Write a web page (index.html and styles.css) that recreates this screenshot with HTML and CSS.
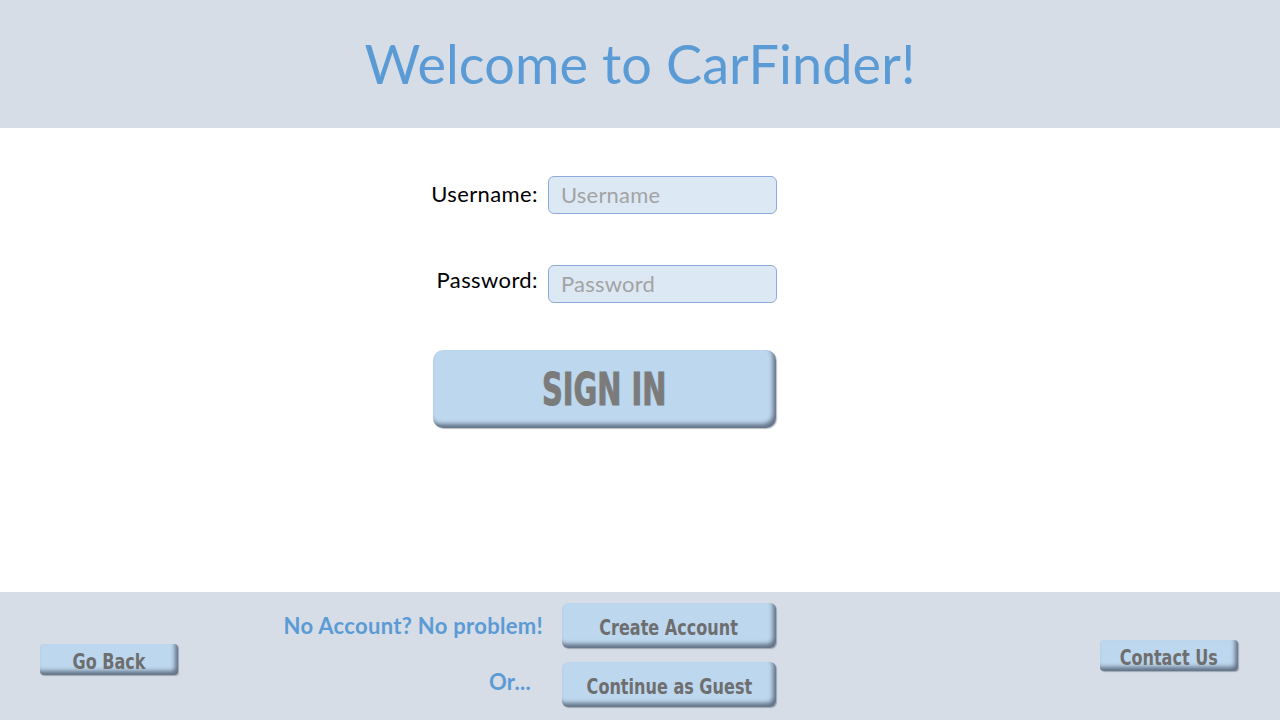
FILE: index.html
```html
<!DOCTYPE html>
<html>
<head>
<meta charset="utf-8">
<link rel="stylesheet" href="styles.css">
</head>
<body>
<header class="top">
  <h1 class="title">Welcome to CarFinder!</h1>
</header>
<main class="main">
  <form class="login">
    <label class="label">Username:</label>
    <div class="field"><span class="ph">Username</span></div>
    <label class="label label-pw">Password:</label>
    <div class="field"><span class="ph">Password</span></div>
    <div class="signin-wrap">
      <div class="btn btn-signin"><span class="signin-text">SIGN IN</span></div>
    </div>
  </form>
</main>
<footer class="bottom">
  <div class="btn btn-small btn-back"><span class="btxt">Go Back</span></div>
  <div class="middle">
    <div class="note">No Account? No problem!</div>
    <div class="btn btn-mid"><span class="btxt">Create Account</span></div>
    <div class="note note-or">Or...</div>
    <div class="btn btn-mid"><span class="btxt">Continue as Guest</span></div>
  </div>
  <div class="btn btn-small btn-contact"><span class="btxt">Contact Us</span></div>
</footer>
</body>
</html>
```
FILE: styles.css
```css
* { box-sizing: border-box; }
html, body { margin: 0; padding: 0; }
body {
  width: 1280px;
  height: 720px;
  overflow: hidden;
  font-family: Lato, "Open Sans", sans-serif;
  background: #ffffff;
}
.top {
  height: 128px;
  background: #d6dde6;
  display: flex;
  align-items: center;
  justify-content: center;
}
.title {
  margin: 0;
  font-weight: 400;
  font-size: 54px;
  letter-spacing: 0.1px;
  color: #5b9bd5;
  padding-bottom: 2px;
}
.main {
  height: 464px;
  padding-top: 48px;
}
.login {
  margin-left: 433px;
  width: 344px;
  display: grid;
  grid-template-columns: 105px 229px;
  column-gap: 10px;
  row-gap: 51px;
}
.label {
  justify-self: end;
  align-self: center;
  white-space: nowrap;
  font-size: 22px;
  letter-spacing: 0.4px;
  color: #000;
  padding-bottom: 3px;
}
.label-pw { padding-bottom: 9px; }
.field {
  height: 38px;
  background: #dde8f5;
  border: 1px solid #8faadc;
  border-radius: 6px;
  display: flex;
  align-items: center;
  padding-left: 12px;
}
.ph {
  font-size: 22px;
  letter-spacing: 0.2px;
  color: #a3a3a3;
  padding-bottom: 2px;
}
.signin-wrap {
  grid-column: 1 / span 2;
  margin-top: -4px;
}
.btn {
  background: #bdd7ee;
  display: flex;
  align-items: center;
  justify-content: center;
  box-shadow: inset -3px -4px 4px rgba(50, 60, 80, 0.65), 1px 1px 1px rgba(60, 70, 90, 0.35);
}
.btn-signin {
  width: 343px;
  height: 78px;
  border-radius: 10px;
}
.signin-text {
  font-family: "DejaVu Sans Condensed", "DejaVu Sans", sans-serif;
  font-weight: 700;
  font-size: 44px;
  color: #7b7b7b;
  display: inline-block;
  transform: scaleX(0.73);
  -webkit-text-stroke: 1px #7b7b7b;
  margin-left: 0;
}
.btxt {
  font-family: "DejaVu Sans Condensed", "DejaVu Sans", sans-serif;
  font-weight: 700;
  font-size: 21px;
  color: #6e6e6e;
  display: inline-block;
  transform: scaleX(0.85);
  white-space: nowrap;
  padding-top: 4px;
}
.bottom {
  height: 128px;
  background: #d6dde6;
  display: flex;
  align-items: flex-start;
  padding-left: 40px;
  padding-right: 42px;
}
.btn-small {
  width: 138px;
  height: 31px;
  border-radius: 4px;
}
.btn-back { margin-top: 52px; }
.btn-contact { margin-top: 48px; margin-left: auto; }
.middle {
  margin-left: 105px;
  margin-top: 11px;
  display: grid;
  grid-template-columns: 260px 214px;
  column-gap: 19px;
  row-gap: 14px;
}
.note {
  justify-self: end;
  align-self: center;
  font-weight: 700;
  font-size: 22px;
  letter-spacing: 0.3px;
  color: #5b9bd5;
  white-space: nowrap;
}
.note-or { padding-right: 12px; padding-bottom: 6px; }
.btn-mid {
  height: 45px;
  border-radius: 6px;
}
```
